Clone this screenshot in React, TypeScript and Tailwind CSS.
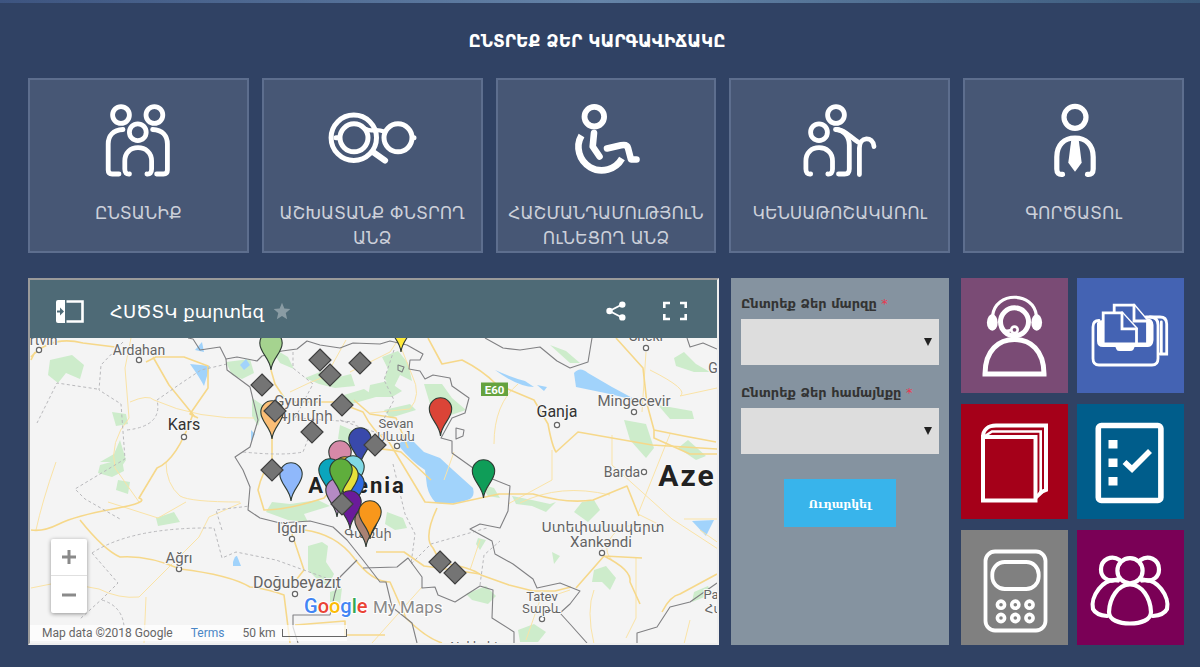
import type { ReactNode } from "react";

const sans = "font-['DejaVu_Sans',sans-serif]";

type Situation = { label: string; viewBox: string; art: ReactNode };

const situations: Situation[] = [
  {
    label: "ԸՆՏԱՆԻՔ",
    viewBox: "94 100 90 80",
    art: (
      <g strokeWidth="4.8">
        <circle cx="122" cy="115" r="8.4" />
        <circle cx="155.4" cy="115" r="8.4" />
        <circle cx="138.8" cy="132.2" r="8.4" />
        <path d="M124 129.5C114 130 109.2 136 109.2 144V170Q109.2 174 113.2 174H120" />
        <path d="M153.6 129.5C163.6 130 168.4 136 168.4 144V170Q168.4 174 164.4 174H157.6" />
        <path d="M130.5 174Q125.8 174.5 125.8 169V161C125.8 152.5 131.5 147.7 139 147.7S152.6 152.5 152.6 161V169Q152.6 174.5 147.9 174" />
      </g>
    ),
  },
  {
    label: "ԱՇԽԱՏԱՆՔ ՓՆՏՐՈՂ ԱՆՁ",
    viewBox: "327 100 90 80",
    art: (
      <g strokeWidth="5">
        <circle cx="353.8" cy="137.8" r="22.7" />
        <circle cx="354" cy="137.8" r="14" />
        <circle cx="398" cy="137.8" r="14" />
        <path d="M336 137.8H339M413 137.8H414" />
        <path d="M366 129C371 132.5 375 128 384 131.5" strokeWidth="4.4" />
        <path d="M373 152L385 160.500" strokeWidth="6.2" />
      </g>
    ),
  },
  {
    label: "ՀԱՇՄԱՆԴԱՄՈւԹՅՈւՆ ՈւՆԵՑՈՂ ԱՆՁ",
    viewBox: "560 100 90 80",
    art: (
      <g strokeWidth="6.6" strokeLinejoin="round">
        <circle cx="593.3" cy="116.7" r="9.8" strokeWidth="5.8" />
        <path d="M593 133L591.7 146.5L598.5 156.5" />
        <path d="M606 148.5L620 145.3Q626 144 627 148L630 159.500H635.5" />
        <path d="M580.5 135.500A23.200 23.200 0 1 0 621 158.500" strokeLinecap="butt" />
      </g>
    ),
  },
  {
    label: "ԿԵՆՍԱԹՈՇԱԿԱՌՈւ",
    viewBox: "795 100 90 80",
    art: (
      <g strokeWidth="4.8">
        <circle cx="836" cy="115" r="8.4" />
        <circle cx="819" cy="132.2" r="8.4" />
        <path d="M810.7 174Q805.9 174.5 805.9 169V161C805.9 152.5 811.6 147.7 819.1 147.7S832.5 152.5 832.5 161V169Q832.5 174.5 827.8 174" />
        <path d="M835.5 129.5C844 129.5 849.3 137 849.3 145V169Q849.3 174 844.5 174H838.5" />
        <path d="M837 129.500C845 130 850 137 858 142" />
        <path d="M859.4 174.5V148C859.4 136 873 136 874 146.500" />
      </g>
    ),
  },
  {
    label: "ԳՈՐԾԱՏՈւ",
    viewBox: "1029 100 90 80",
    art: (
      <g strokeWidth="5.2">
        <circle cx="1075" cy="117.3" r="11" />
        <path d="M1062.5 174.3Q1056.8 175 1056.8 169V157C1056.8 145 1064 138 1075 138S1093.2 145 1093.2 157V169Q1093.2 175 1087.5 174.3" />
        <path d="M1071.5 138H1078.5L1081.7 162.7L1075 171.7L1068.3 162.7Z" fill="#fff" stroke="none" />
      </g>
    ),
  },
];

const services = [
  {
    label: "Օպերատոր",
    bg: "bg-[#7a4b75]",
    viewBox: "961 278 107 115",
    art: (
      <g strokeWidth="5">
        <circle cx="1014.5" cy="321.8" r="14" strokeWidth="5" />
        <path d="M992.5 316C995 291 1034 291 1036.5 316" strokeWidth="3.2" />
        <ellipse cx="992.3" cy="322.5" rx="5.4" ry="8.2" fill="#fff" stroke="none" />
        <ellipse cx="1036.700" cy="322.5" rx="5.4" ry="8.2" fill="#fff" stroke="none" />
        <path d="M1001 329Q1006 332 1011 330" strokeWidth="2.6" />
        <circle cx="1014.5" cy="329.8" r="3.2" strokeWidth="2.6" />
        <path d="M985 374C985 350 999 339.5 1014.5 339.5S1044 350 1044 374Z" strokeLinejoin="miter" />
      </g>
    ),
  },
  {
    label: "Փաստաթղթեր",
    bg: "bg-[#4463b3]",
    viewBox: "1077 278 107 115",
    art: (
      <g strokeWidth="2.8">
        <path d="M1099 320.5Q1093 320.5 1093 327V358.5Q1093 365 1099 365H1152Q1158 365 1158 358.5V325Q1158 317 1150 317" />
        <path d="M1097 323Q1099 319.500 1103 320.500V318H1146Q1153 318 1153.500 325V340Q1153 347 1148 347H1103Q1097 347 1097 341Z" fill="#fff" stroke="none" />
        <path d="M1115 346H1135L1133.500 349.500Q1132.500 351 1130 351H1120Q1117 351 1116.500 349.500Z" fill="#fff" stroke="none" />
        <g fill="#4463b3" strokeLinejoin="miter">
          <path d="M1114.200 344V305.200H1134L1147.500 321V344Z" />
          <path d="M1134 305.200V321H1147.500" fill="#4463b3" />
          <path d="M1103.200 343.800V312.8H1122L1136.500 328.500V343.800Z" />
          <path d="M1122 312.8V328.800H1136.500" />
        </g>
        <path d="M1146 317H1160Q1166.700 317 1166.700 324V354H1160" />
        <path d="M1161.300 353V322" />
      </g>
    ),
  },
  {
    label: "Գրադարան",
    bg: "bg-[#a50019]",
    viewBox: "961 404 107 115",
    art: (
      <g strokeWidth="4" strokeLinejoin="miter">
        <path d="M983 437V500.500H1035.500V437Z" />
        <path d="M983 437C983 430 988 425.5 996 425.5H1046V490L1041 492" />
        <path d="M985 436L992 431.500H1040.700V492L1037 496" strokeWidth="2.6" />
        <path d="M1036 498L1043 491.500" strokeWidth="3" />
      </g>
    ),
  },
  {
    label: "Հարցաշար",
    bg: "bg-[#005d8b]",
    viewBox: "1077 404 107 115",
    art: (
      <g strokeWidth="5.6">
        <rect x="1098.3" y="425.5" width="62.6" height="75" rx="3" />
        <path d="M1108.5 440H1117.5V448.5H1108.5ZM1108.5 458.5H1117.5V467H1108.5ZM1108.5 477H1117.5V485.5H1108.5Z" fill="#fff" stroke="none" />
        <path d="M1124.500 462L1132 469L1150 451" strokeLinecap="butt" strokeLinejoin="miter" />
      </g>
    ),
  },
  {
    label: "Հաշվիչ",
    bg: "bg-[#808080]",
    viewBox: "961 530 107 115",
    art: (
      <g strokeWidth="3.8">
        <rect x="985.5" y="551.5" width="60" height="79" rx="9.5" />
        <rect x="992.3" y="562" width="46.4" height="27" rx="12.5" />
        {[1001, 1015.3, 1029.5].map((x) => (
          <g key={x}>
            <circle cx={x} cy="604.7" r="3.6" strokeWidth="3.6" />
            <circle cx={x} cy="618" r="3.6" strokeWidth="3.6" />
          </g>
        ))}
      </g>
    ),
  },
  {
    label: "Խումբ",
    bg: "bg-[#7a0056]",
    viewBox: "1077 530 107 115",
    art: (
      <g strokeWidth="4.2">
        <circle cx="1130" cy="570.7" r="12.6" />
        <path d="M1119.5 560C1112 554.500 1101 559 1101 569.5C1101 577 1107 581 1113 580.500L1119 579" />
        <path d="M1140.5 560C1148 554.500 1159 559 1159 569.5C1159 577 1153 581 1147 580.500L1141 579" />
        <path d="M1130 584.500C1118 584.500 1109.500 598 1109 612C1109 620 1119 623.500 1130 623.500S1151 620 1151 612C1150.500 598 1142 584.500 1130 584.500Z" />
        <path d="M1118 580.500C1103 577 1090 597 1093 609Q1096 615 1107 616" />
        <path d="M1142 580.500C1157 577 1170 597 1167 609Q1164 615 1153 616" />
      </g>
    ),
  },
];

const greens = [
  "M50 360l22 -5l12 10l-4 14l-14 -6l-8 10l-10 -8z",
  "M112 412l14 2l2 10l-12 2z",
  "M120 440l6 20l-8 12l-6 -10l-12 0l14 -8z",
  "M100 465l22 -6l2 12l-12 6l-14 -4z",
  "M118 480l12 2l-2 12l-12 -4z",
  "M156 518l18 -6l6 10l-22 4z",
  "M226 362l24 -3l4 14l-12 6l-10 -4z",
  "M268 345l20 12l6 12l-14 -6z",
  "M252 398l12 8l-6 20l-6 -10z",
  "M305 378l20 -8l10 8l16 -4l4 12l-20 2l-16 -4z",
  "M382 357l16 -6l10 12l4 18l-12 -6l-6 12l-10 -8l4 -10z",
  "M370 385l18 -4l14 10l-10 6l-24 0z",
  "M344 395l20 -6l12 8l-28 8z",
  "M384 410l26 -6l6 6l-26 8z",
  "M424 384l18 0l10 14l14 12l-18 6l-8 -14l-10 2z",
  "M340 425l14 6l-4 12l-12 -4z",
  "M272 502l18 2l28 -4l12 6l-26 8l4 8l-20 -2l-22 -8z",
  "M308 546l14 -4l6 4l-2 16l8 12l-6 12l-12 -8l-8 -8z",
  "M330 592l12 -4l-2 16l-10 -2z",
  "M387 512l16 6l4 10l-12 2l-10 -6z",
  "M466 594l20 -8l10 10l-8 8l-16 -4z",
  "M478 538l8 2l-6 10l-4 -6z",
  "M512 496l20 4l18 4l6 -2l-10 10l-14 -6l-16 -2z",
  "M582 502l12 -2l6 10l-12 12l-14 -10z",
  "M594 570l12 -4l10 12l-6 12l-8 -8l-10 0z",
  "M552 552l8 4l-6 8z",
  "M518 630l16 -6l12 8l-8 10h-18z",
  "M624 420l22 4l8 24l-8 10l-16 -18z",
  "M658 405l34 6l2 8l-24 0z",
  "M674 358l10 -6l12 12l14 8l-16 0l-18 -6z",
  "M678 448l10 -8l18 16l-10 4z",
  "M694 592l14 -6l4 8l-20 8z",
  "M550 345l16 6l14 12l-10 0z",
  "M480 484l14 4l6 10l-12 -2z",
];

const lakes = [
  "M190 364l20 2l-6 20q-4 -8 -14 -22z",
  "M240 365l6 -6l4 6l-6 5z",
  "M195 350l7 -8l2 10z",
  "M251 430l4 4l-4 8z",
  "M398 445Q404 438 413 441L424 452L440 458L453 470L473 488Q475 496 470 499Q455 505 436 503Q429 496 427 486L425 470Q412 462 398 445Z",
  "M495 370q18 8 30 11l9 6q-16 0 -39 -17z",
  "M537 385l10 2l-3 4z",
  "M574 373q6 -7 14 0l24 14l26 14q-30 -8 -62 -14z",
  "M692 521l22 -1l-8 16z",
  "M233 562q2 -7 4 -6l4 10h-8z",
];

const majorRoads = [
  "M31 530q12 2 28 -6t54 -15t26 -11l18 -30q20 -8 36 -54",
  "M80 520q24 30 40 37q28 -2 60 12q50 6 70 18q18 2 34 8l6 48",
  "M146 362l10 -5h28l24 9v22l-18 26l8 4M153 357l16 28l26 32",
  "M31 357q20 -22 52 -14l32 4M35 352l-4 8",
  "M272 430v30q-10 12 -14 30l6 20q24 0 60 -12l12 -14l14 4",
  "M292 534l12 36l-8 10M304 530q32 4 50 28t36 24l16 36q20 20 36 25",
  "M271 370l4 14l12 18h50l26 10q10 20 26 30l18 30l18 30l28 2l46 -10h34q34 10 60 6l34 -14l12 30",
  "M354 400l16 14l26 4l12 30M337 450q40 -4 64 2l30 28",
  "M437 508q-14 30 -4 40l8 15q30 4 40 12l28 10l24 6h22l16 -4",
  "M376 552h28l20 14q30 4 56 8",
  "M428 338l14 26l20 -4q20 10 34 24l38 16l14 24q4 22 8 28l22 -20l74 13l65 4l17 -2",
  "M616 338l27 30l4 36l7 26l30 6l32 6M654 430v8l36 16h27",
  "M576 588l28 -32q28 14 26 26l10 22M604 556l38 2",
  "M662 612q8 -16 18 -18l37 -20",
  "M295 625l50 -4v14h40",
];

const minorRoads = [
  "M131 338l-6 30l4 50q-20 24 -14 50l24 34M130 402q18 -8 24 -2q44 20 100 18",
  "M31 588l30 -6l38 7q20 10 40 8l60 -60l10 -20l32 -14M146 597l-2 46",
  "M166 462q0 22 14 34q10 6 60 6M56 462q-14 40 -20 68",
  "M186 502l-28 16l-50 -16",
  "M290 392q20 -10 36 -16l20 -36M350 372l40 -20l20 -30",
  "M400 345l12 30q10 20 -2 34l-40 4M444 480l10 -28",
  "M552 450v30l-44 24M518 384q-24 20 -24 60",
  "M612 435v30l60 54l46 30M646 352l-4 60M650 370q40 20 30 26l37 -8",
  "M670 434l-32 80l24 12h-40q-24 20 -10 34M684 519h33",
  "M700 530l20 14M570 590l-30 10l-14 40M594 590q-8 20 0 54",
  "M636 558v60l-10 20M480 540l-10 30M422 587l-50 56",
  "M690 620l-6 24M520 503q40 -20 90 -8",
];

const borders = [
  "M188 338l5 1l7 11l20 -3l6 12l11 -2l20 4l5 -5l20 -5l15 -2l10 -8l13 4l20 3l13 -5l27 1l10 -3l17 4l16 9l-3 6h-10l-1 9l11 2l5 8l8 -4l17 3l2 8l17 12l-4 15l-13 5l-11 20l11 3v12l21 15l12 8l25 10l-2 25l-8 17l-20 -4l-10 5l22 12l3 13l18 10l20 15l4 9l23 -5l20 8l-10 13l-10 9l10 11l17 19",
  "M226 359l1 11l23 17l8 33l-8 27l-15 10l8 13l7 17l-2 23l12 8l20 5l30 -2l23 6l14 13l16 20l17 22l6 0l6 25l20 16l5 20",
  "M363 568l34 -1l11 -9l14 19v11l13 -1l3 8l17 7l25 -16l13 4l-1 28l22 14v12",
  "M357 560l-17 17l-5 16l-5 22l-37 0v12l5 16",
  "M717 583l-27 19l-20 5l-13 20l-20 6v10",
  "M485 338l18 10l17 2l20 -3l17 14l13 7l18 -6l4 -24",
  "M687 338l3 9l13 -4l14 6",
  "M456 428l8 2l-1 6l-7 3zM398 365l6 2l-2 5l-4 -2z",
];

const provinces = [
  "M123 342l-22 23l-2 25l22 14l4 55l-50 30l10 10l35 20M97 389l-40 -6l-20 40",
  "M127 430q36 -4 30 -30l26 -18l18 -12l26 -6",
  "M92 553q40 -26 122 -25l8 30l14 -6l40 8l50 18M92 553l26 30l-16 16l-22 20M102 600q20 6 22 26",
  "M293 352v16l20 16l-18 34l60 4M243 452q40 4 60 0l10 -26M340 420l46 16",
  "M394 350l-10 30l10 20l-16 30M393 464l12 50l10 20l-4 30l20 -20l56 -16M480 585l4 -30l16 -14",
  "M222 530l-6 -20l34 -4",
];

type Label = { x: number; y: number; t: string; s: number; c?: string };
const labels: Label[] = [
  { x: 39, y: 345, t: "Artvin", s: 14 },
  { x: 139, y: 355, t: "Ardahan", s: 14 },
  { x: 184, y: 430, t: "Kars", s: 16, c: "#333" },
  { x: 298, y: 406, t: "Gyumri", s: 15 },
  { x: 305, y: 421, t: "Գյումրի", s: 14 },
  { x: 396, y: 428, t: "Sevan", s: 13 },
  { x: 396, y: 441, t: "Սևան", s: 12 },
  { x: 557, y: 417, t: "Ganja", s: 16, c: "#333" },
  { x: 634, y: 406, t: "Mingecevir", s: 15 },
  { x: 646, y: 341, t: "Sheki", s: 14 },
  { x: 713, y: 373, t: "G", s: 14 },
  { x: 622, y: 477, t: "Barda", s: 14 },
  { x: 292, y: 533, t: "Iğdır", s: 15 },
  { x: 179, y: 563, t: "Ağrı", s: 15 },
  { x: 297, y: 588, t: "Doğubeyazıt", s: 16 },
  { x: 368, y: 538, t: "Գառնի", s: 13 },
  { x: 603, y: 532, t: "Ստեփանակերտ", s: 14 },
  { x: 601, y: 547, t: "Xankəndi", s: 15 },
  { x: 542, y: 601, t: "Tatev", s: 13 },
  { x: 541, y: 613, t: "Տաթև", s: 12 },
  { x: 711, y: 599, t: "Pa", s: 13 },
  { x: 715, y: 613, t: "Հա", s: 12 },
  { x: 484, y: 651, t: "Nakhchivan", s: 13 },
];

const towns = [
  [39, 350], [139, 360], [184, 437], [397, 446], [557, 425], [634, 412], [646, 348], [644, 472],
  [292, 539], [179, 569], [295, 594], [602, 553], [542, 619],
];

const pins: [number, number, string][] = [
  [271, 343, "#a5d38f"],
  [272, 412, "#fbbe76"],
  [401, 325, "#ffea3a"],
  [360, 439, "#3949ab"],
  [340, 452, "#d689a8"],
  [440.5, 409, "#db4437"],
  [483.5, 471, "#0f9d58"],
  [291, 474, "#8fb8fb"],
  [345, 468, "#fbc02d"],
  [330, 470, "#0aa5bd"],
  [353, 467, "#80d8e4"],
  [337, 490, "#b58ac4"],
  [353, 483, "#2f6be0"],
  [347, 475, "#e6e03a"],
  [341, 470, "#5fae3c"],
  [350, 502, "#6a1b9a"],
  [366, 520, "#a98274"],
  [370, 512, "#f8971b"],
];

const diamonds = [
  [262, 385], [320, 360], [330, 375], [360, 363], [342, 405], [275, 411], [312, 432],
  [375, 445], [272, 470], [342, 504], [440, 562], [455, 573],
];

function MapDrawing() {
  return (
    <svg
      viewBox="30 338 687 305"
      preserveAspectRatio="xMidYMid slice"
      className="block h-full w-full font-['Roboto','DejaVu_Sans',sans-serif]"
      role="img"
      aria-label="Քարտեզ"
    >
      <rect x="30" y="337" width="688" height="307" fill="#f4f4f4" />
      <g fill="#cdeccb">{greens.map((d) => <path key={d} d={d} />)}</g>
      <g fill="#a1d3fb">{lakes.map((d) => <path key={d} d={d} />)}</g>
      <g fill="none" strokeLinejoin="round">
        <g stroke="#fae3a6">{minorRoads.map((d) => <path key={d} d={d} />)}</g>
        <g stroke="#f6d88a" strokeWidth="1.6">{majorRoads.map((d) => <path key={d} d={d} />)}</g>
        <g stroke="#b9b9bc" strokeDasharray="3 2.5">{provinces.map((d) => <path key={d} d={d} />)}</g>
        <g stroke="#808083" strokeWidth="1.1">{borders.map((d) => <path key={d} d={d} />)}</g>
      </g>
      <g fill="#fff" stroke="#666" strokeWidth="1.2">
        {towns.map(([x, y]) => <circle key={x} cx={x} cy={y} r="2.6" />)}
      </g>
      <g textAnchor="middle" stroke="#f8f8f8" strokeWidth="2" paintOrder="stroke" strokeLinejoin="round">
        {labels.map((l) => (
          <text key={l.t} x={l.x} y={l.y} fontSize={l.s} fill={l.c ?? "#646464"}>{l.t}</text>
        ))}
        <text x="357" y="493" fontSize="22" fontWeight="700" fill="#222" letterSpacing="2">Armenia</text>
        <text x="687" y="486" fontSize="30" fontWeight="700" fill="#222" letterSpacing="2">Aze</text>
      </g>
      <rect x="481" y="382.5" width="27" height="13.500" fill="#65a23f" />
      <text x="494.5" y="393.5" fontSize="11.5" fontWeight="700" fill="#fff" textAnchor="middle">E60</text>
      <g stroke="#2e3a33" strokeWidth="1.1">
        {pins.map(([x, y, c]) => (
          <path
            key={c}
            transform={`translate(${x} ${y})`}
            fill={c}
            d="M0 27C-1 15 -11.2 10 -11.2 0A11.2 11.2 0 1 1 11.2 0C11.2 10 1 15 0 27Z"
          />
        ))}
      </g>
      <g fill="#747474" stroke="#3f3f3f" strokeWidth="1.2">
        {diamonds.map(([x, y]) => (
          <path key={x} transform={`translate(${x} ${y})`} d="M0 -11L11 0L0 11L-11 0Z" />
        ))}
      </g>
      <text x="304" y="613" fontSize="20" fontWeight="500" stroke="#fff" strokeWidth="2" paintOrder="stroke">
        <tspan fill="#4285f4">G</tspan>
        <tspan fill="#ea4335">o</tspan>
        <tspan fill="#fbbc05">o</tspan>
        <tspan fill="#4285f4">g</tspan>
        <tspan fill="#34a853">l</tspan>
        <tspan fill="#ea4335">e</tspan>
      </text>
      <text x="373" y="613" fontSize="17" fill="#8a8a8a" stroke="#fff" strokeWidth="2" paintOrder="stroke">My Maps</text>
    </svg>
  );
}

function MapPanel() {
  return (
    <section className="flex flex-col border-2 border-t-[#9a9a9a] border-r-[#eeeeee] border-b-[#eeeeee] border-l-[#9a9a9a]">
      <header className="flex h-[58px] shrink-0 items-center bg-[#4e6a76] pt-1 pr-[29px] pl-[26px] text-white">
        <button type="button" aria-label="Ցուցակ" className="shrink-0">
          <svg viewBox="0 0 28 23" className="h-[23px] w-7">
            <path d="M0 2Q0 0 2 0H9V23H2Q0 23 0 21Z" fill="#fff" />
            <path d="M10.5 1.5H26.5V21.5H10.5" fill="none" stroke="#fff" strokeWidth="2.6" />
            <path d="M1 10.5H4V7.5L8 11.5L4 15.5V12.5H1Z" fill="#4e6a76" />
          </svg>
        </button>
        <h2 className={`ml-[26px] text-[18px] whitespace-nowrap ${sans}`}>ՀՍԾՏԿ քարտեզ</h2>
        <svg viewBox="0 0 24 24" className="ml-2 h-5 w-5 shrink-0" aria-hidden="true">
          <path d="M12 18l6.2 4-1.7-7.5L22 9.5l-7.2-.6L12 2 9.2 8.900 2 9.5l5.5 5L5.8 22z" fill="#8a9ca4" />
        </svg>
        <div className="ml-auto flex items-center gap-9">
          <button type="button" aria-label="Կիսվել">
            <svg viewBox="0 0 20 20" className="h-5 w-5" fill="#fff">
              <path d="M16 3.5L3.5 10L16 16.5" fill="none" stroke="#fff" strokeWidth="1.8" />
              <circle cx="3.5" cy="10" r="3.2" />
              <circle cx="16.3" cy="3.6" r="3.2" />
              <circle cx="16.3" cy="16.4" r="3.2" />
            </svg>
          </button>
          <button type="button" aria-label="Ամբողջ էկրան">
            <svg viewBox="0 0 26 20" className="h-5 w-[26px]" fill="none" stroke="#fff" strokeWidth="2.6">
              <path d="M8 2H2.3V7M18 2H23.7V7M8 18H2.3V13M18 18H23.7V13" />
            </svg>
          </button>
        </div>
      </header>
      <div className="relative min-h-0 flex-1 overflow-hidden font-['Roboto',sans-serif]">
        <div className="absolute inset-0">
          <MapDrawing />
        </div>
        <div className="absolute bottom-[30px] left-[21px] flex w-9 flex-col rounded-xs bg-white text-[#8a8a8a] shadow-[0_1px_4px_rgba(0,0,0,0.4)]">
          <button type="button" aria-label="Մեծացնել" className="flex h-[37px] items-center justify-center border-b border-[#e0e0e0]">
            <svg viewBox="0 0 14 14" className="h-3.5 w-3.5" stroke="currentColor" strokeWidth="3">
              <path d="M0 7H14M7 0V14" />
            </svg>
          </button>
          <button type="button" aria-label="Փոքրացնել" className="flex h-[37px] items-center justify-center">
            <svg viewBox="0 0 14 14" className="h-3.5 w-3.5" stroke="currentColor" strokeWidth="3">
              <path d="M0 7H14" />
            </svg>
          </button>
        </div>
        <div className="absolute bottom-[2px] left-0 flex h-4 items-center gap-[18px] bg-white/70 pl-3 text-[12px] text-[#666]">
          <span className="whitespace-nowrap">Map data ©2018 Google</span>
          <a href="#terms" className="text-[#4a86c6]">Terms</a>
          <span className="flex items-center gap-1.5 whitespace-nowrap">
            50 km
            <span className="h-2 w-[65px] border border-t-0 border-[#666]" />
          </span>
        </div>
      </div>
    </section>
  );
}

function SelectField({ id, label }: { id: string; label: string }) {
  return (
    <div className="flex flex-col">
      <label htmlFor={id} className="text-[13px] leading-5 font-bold whitespace-nowrap text-[#333]">
        {label} <span className="font-normal text-[#e8384f]">*</span>
      </label>
      <div className="relative mt-[5px]">
        <select id={id} className="block h-[46px] w-full appearance-none bg-[#dddddd] px-3 text-sm" defaultValue="">
          <option value="" />
        </select>
        <svg viewBox="0 0 8 8" className="pointer-events-none absolute top-[19px] right-[7px] h-2 w-2" aria-hidden="true">
          <path d="M0 0H8L4 8Z" fill="#222" />
        </svg>
      </div>
    </div>
  );
}

export default function App() {
  return (
    <main className={`min-h-screen bg-[#304264] pb-[22px] ${sans}`}>
      <div className="h-[3px] bg-linear-to-r from-[#3d5480] via-[#6584a8] to-[#3b5a7c]" />
      <div className="pr-4 pl-7">
        <h1 className="pt-[26px] pr-[18px] text-center text-[17px] leading-6 font-bold text-white">ԸՆՏՐԵՔ ՁԵՐ ԿԱՐԳԱՎԻՃԱԿԸ</h1>
        <nav className="mt-[25px] grid grid-cols-5 gap-[13px]">
          {situations.map((s) => (
            <a
              key={s.label}
              href="#situation"
              className="flex min-h-[175px] flex-col items-center border-2 border-[#5d6e8e] bg-[#475775] pt-5 text-center text-[17px] leading-[25px] text-[#ccd0da]"
            >
              <svg viewBox={s.viewBox} className="h-20 w-[90px]" fill="none" stroke="#fff" strokeLinecap="round" aria-hidden="true">
                {s.art}
              </svg>
              <span className="mt-[21px] px-2">{s.label}</span>
            </a>
          ))}
        </nav>
        <div className="mt-[25px] grid grid-cols-[691fr_218fr_223fr] gap-3">
          <MapPanel />
          <form className="flex flex-col gap-[18px] bg-[#8593a0] px-[10px] pt-4">
            <SelectField id="region" label="Ընտրեք Ձեր մարզը" />
            <SelectField id="community" label="Ընտրեք Ձեր համայնքը" />
            <button
              type="submit"
              className="mt-[7px] h-12 w-28 self-center bg-[#38b4eb] pt-1 font-['DejaVu_Serif',serif] text-[11px] font-bold text-white"
            >
              Ուղարկել
            </button>
          </form>
          <div className="grid grid-cols-2 gap-x-[9px] gap-y-[11px]">
            {services.map((s) => (
              <a key={s.label} href="#service" aria-label={s.label} className={`block h-[115px] ${s.bg}`}>
                <svg viewBox={s.viewBox} className="h-full w-full" fill="none" stroke="#fff" strokeLinecap="round" aria-hidden="true">
                  {s.art}
                </svg>
              </a>
            ))}
          </div>
        </div>
      </div>
    </main>
  );
}
